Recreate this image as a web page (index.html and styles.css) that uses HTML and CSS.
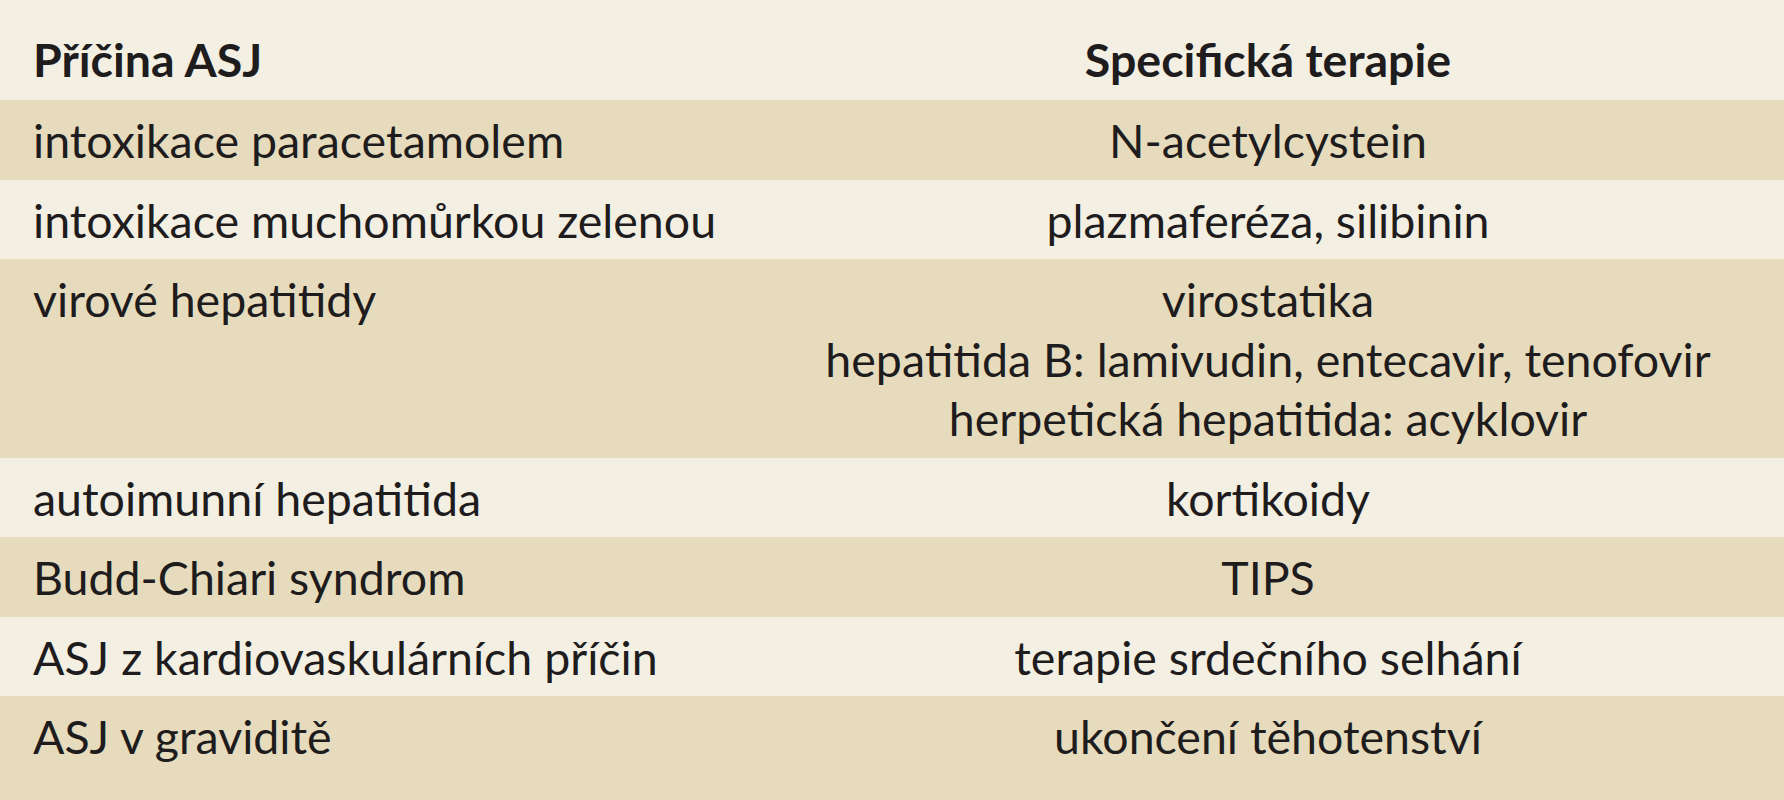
FILE: index.html
```html
<!DOCTYPE html>
<html lang="cs">
<head>
<meta charset="utf-8">
<title>Specifická terapie ASJ</title>
<link rel="stylesheet" href="styles.css">
</head>
<body>
<div class="table">
  <div class="row head">
    <div class="cell cause">Příčina ASJ</div>
    <div class="cell therapy">Specifická terapie</div>
  </div>
  <div class="row dark">
    <div class="cell cause">intoxikace paracetamolem</div>
    <div class="cell therapy">N-acetylcystein</div>
  </div>
  <div class="row light">
    <div class="cell cause">intoxikace muchomůrkou zelenou</div>
    <div class="cell therapy">plazmaferéza, silibinin</div>
  </div>
  <div class="row dark">
    <div class="cell cause">virové hepatitidy</div>
    <div class="cell therapy">virostatika<br>hepatitida B: lamivudin, entecavir, tenofovir<br>herpetická hepatitida: acyklovir</div>
  </div>
  <div class="row light">
    <div class="cell cause">autoimunní hepatitida</div>
    <div class="cell therapy">kortikoidy</div>
  </div>
  <div class="row dark">
    <div class="cell cause">Budd-Chiari syndrom</div>
    <div class="cell therapy">TIPS</div>
  </div>
  <div class="row light">
    <div class="cell cause">ASJ z kardiovaskulárních příčin</div>
    <div class="cell therapy">terapie srdečního selhání</div>
  </div>
  <div class="row dark last">
    <div class="cell cause">ASJ v graviditě</div>
    <div class="cell therapy">ukončení těhotenství</div>
  </div>
</div>
</body>
</html>
```
FILE: styles.css
```css
html, body {
  margin: 0;
  padding: 0;
}
body {
  background: #e6dbbd;
  font-family: Lato, "Open Sans", sans-serif;
  font-size: 46.5px;
  line-height: 59.5px;
  color: #1e1c1c;
}
.table {
  display: flex;
  flex-direction: column;
  width: 1784px;
}
.row {
  display: grid;
  grid-template-columns: 752px 1fr;
  padding: 11px 0 9px;
}
.row.head {
  padding-top: 30px;
  padding-bottom: 10.5px;
  background: #f4efe3;
  font-weight: 700;
}
.row.dark {
  background: #e6dbbd;
}
.row.light {
  background: #f4efe3;
}
.row.last {
  padding-bottom: 34px;
}
.cause {
  padding-left: 33px;
  white-space: nowrap;
}
.therapy {
  text-align: center;
  white-space: nowrap;
}
```
